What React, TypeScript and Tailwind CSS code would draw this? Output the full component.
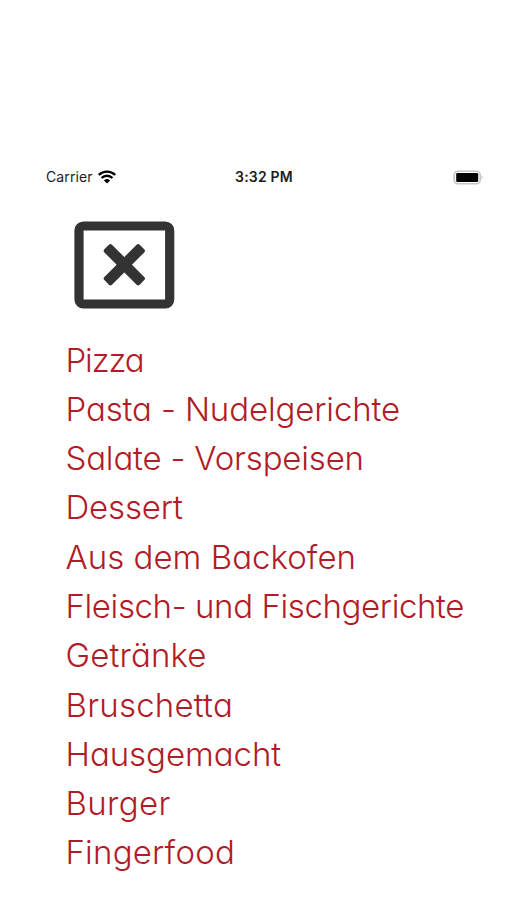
const categories = [
  { name: "Pizza", tracking: "tracking-[-1.1px]" },
  { name: "Pasta - Nudelgerichte", tracking: "tracking-[-0.12px]" },
  { name: "Salate - Vorspeisen", tracking: "tracking-[-0.18px]" },
  { name: "Dessert", tracking: "tracking-[-0.15px]" },
  { name: "Aus dem Backofen", tracking: "tracking-[0.02px]" },
  { name: "Fleisch- und Fischgerichte", tracking: "tracking-[-0.39px]" },
  { name: "Getränke", tracking: "tracking-[0.15px]" },
  { name: "Bruschetta", tracking: "tracking-[0.22px]" },
  { name: "Hausgemacht", tracking: "tracking-[-0.05px]" },
  { name: "Burger", tracking: "tracking-[0.35px]" },
  { name: "Fingerfood", tracking: "tracking-[0.2px]" },
];

function WifiIcon() {
  return (
    <svg aria-hidden="true" viewBox="0 0 18 14" fill="none" className="h-[14px] w-[18px]">
      <path
        d="M.8 5a11.6 11.6 0 0 1 16.4 0M3.6 8a7.6 7.6 0 0 1 10.8 0"
        stroke="#000"
        strokeWidth="2.4"
      />
      <path d="M5.9 10.5a4.6 4.6 0 0 1 6.2 0L9 13.6z" fill="#000" />
    </svg>
  );
}

function BatteryIcon() {
  return (
    <svg aria-hidden="true" viewBox="0 0 30 15" fill="none" className="h-[15px] w-[30px]">
      <rect x="1.2" y="1.2" width="26" height="12.6" rx="3.8" stroke="#c4c4c4" strokeWidth="1.6" />
      <rect x="3.2" y="3.1" width="22" height="8.8" rx="1.2" fill="#000" />
      <path d="M28.6 5.500v4c.8-.4 1.1-1.1 1.1-2s-.3-1.600-1.100-2z" fill="#c4c4c4" />
    </svg>
  );
}

function StatusBar() {
  return (
    <div className="grid grid-cols-[188px_60px_1fr] items-center pr-[24px] pl-[46px] text-[#1c1c1c]">
      <div className="flex items-center gap-[5px] text-[14px] leading-5">
        <span className="tracking-[0.1px]">Carrier</span>
        <WifiIcon />
      </div>
      <span className="text-center text-[14px] leading-5 font-semibold tracking-[0.2px] whitespace-nowrap">
        3:32 PM
      </span>
      <div className="flex justify-end">
        <BatteryIcon />
      </div>
    </div>
  );
}

function CloseButton() {
  return (
    <button type="button" aria-label="Menü schließen" className="mt-[34px] ml-[74px] block">
      <svg aria-hidden="true" viewBox="0 0 101 88" fill="none" className="h-[88px] w-[101px]">
        <rect x="5" y="5" width="90.7" height="78" rx="4.5" stroke="#333" strokeWidth="9.2" />
        <g fill="#333" transform="translate(50.3 43.7)">
          <rect x="-25" y="-5.4" width="50" height="10.8" rx="2.2" transform="rotate(45)" />
          <rect x="-25" y="-5.4" width="50" height="10.8" rx="2.2" transform="rotate(-45)" />
        </g>
      </svg>
    </button>
  );
}

export default function App() {
  return (
    <main className="h-[900px] w-[507px] overflow-hidden bg-white pt-[167px] font-['Inter','Liberation_Sans',sans-serif]">
      <StatusBar />
      <CloseButton />
      <nav aria-label="Speisekarte" className="mt-[26.5px] pl-[65.5px]">
        <ul className="text-[33px] leading-[49.3px] font-light whitespace-nowrap text-[#b01c28] [font-feature-settings:'cv11','ss03']">
          {categories.map((category) => (
            <li key={category.name} className={category.tracking}>
              <a href="#">{category.name}</a>
            </li>
          ))}
        </ul>
      </nav>
    </main>
  );
}
